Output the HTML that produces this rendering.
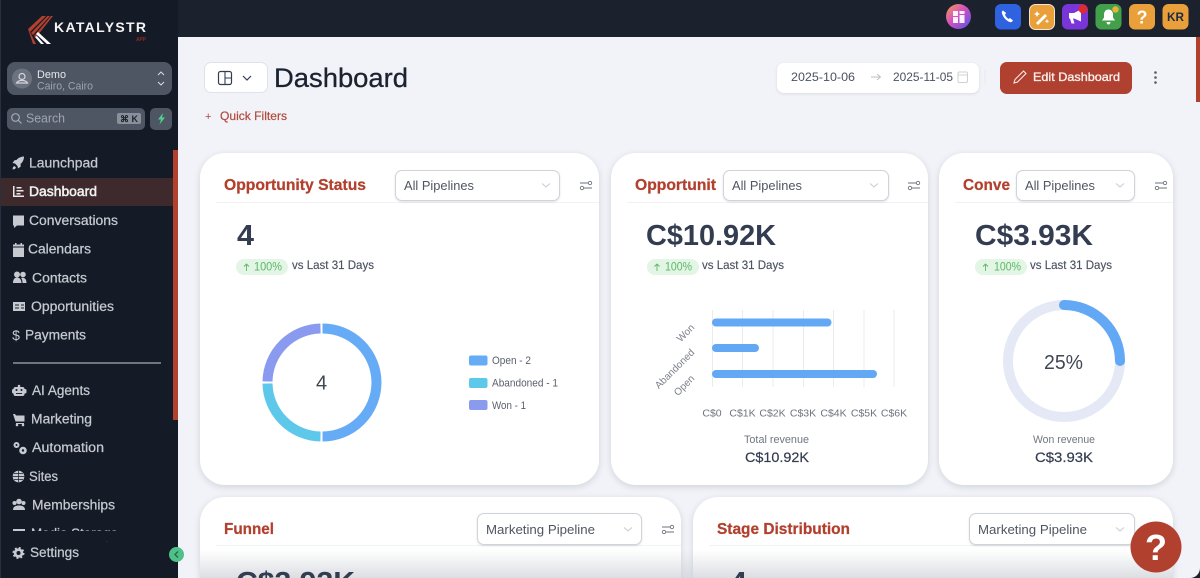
<!DOCTYPE html>
<html lang="en"><head><meta charset="utf-8"><title>Dashboard</title>
<style>
html,body{margin:0;padding:0;width:1200px;height:578px;overflow:hidden;background:#f1f3f8;font-family:"Liberation Sans",sans-serif}
#r{position:absolute;left:0;top:0;width:1200px;height:578px;overflow:hidden}
.b{position:absolute;box-sizing:border-box}
.card{background:#fff;border-radius:25px;box-shadow:0 2px 7px rgba(40,50,70,.16)}
.sel{background:#fff;border:1px solid #cfd3da;border-radius:7px;box-shadow:0 1px 2px rgba(0,0,0,.12)}
svg{position:absolute;left:0;top:0}
text{font-family:"Liberation Sans",sans-serif}
.s{fill:#c6c9d0;stroke:#c6c9d0;stroke-width:.25;font-size:13.5px}
.h{fill:#b2402e;stroke:#b2402e;stroke-width:.25;font-size:15.5px;font-weight:bold}
.o{fill:#505561;font-size:13px}
.n{fill:#333c50;font-weight:bold;font-size:29px}
.v{fill:#4b5160;stroke:#4b5160;stroke-width:.15;font-size:12px}
.g{fill:#5cb868;font-size:12px}
.m{fill:#70757f;font-size:11px}
</style></head><body><div id="r">
<div class="b" style="left:178px;top:0;width:1022px;height:37px;background:#1c212e;box-shadow:0 1px 2px rgba(0,0,0,.15)"></div>
<div class="b" style="left:178px;top:37px;width:1022px;height:541px;background:#f1f3f8"></div>
<div class="b" style="left:0;top:0;width:178px;height:578px;background:#141a26;border-left:1px solid #2a303c"></div>
<div class="b" style="left:1px;top:178px;width:172px;height:28px;background:#3e2a2d"></div>
<div class="b" style="left:173px;top:150px;width:5px;height:270px;background:#b2402e"></div>
<div class="b" style="left:1196px;top:37px;width:4px;height:65px;background:#b2402e"></div>
<div class="b" style="left:7px;top:62px;width:165px;height:33px;background:#4e5664;border-radius:8px"></div>
<div class="b" style="left:7px;top:108px;width:138px;height:22px;background:#4e5664;border-radius:5px"></div>
<div class="b" style="left:117px;top:113px;width:24px;height:11px;background:#8a909b;border-radius:2px"></div>
<div class="b" style="left:150px;top:108px;width:22px;height:22px;background:#4e5664;border-radius:5px"></div>
<div class="b" style="left:13px;top:362px;width:148px;height:1.5px;background:#6f7480"></div>

<div class="b" style="left:204px;top:62px;width:64px;height:31px;background:#fff;border:1px solid #dfe2e8;border-radius:7px"></div>
<div class="b" style="left:777px;top:63px;width:202px;height:30px;background:#fff;border-radius:7px;box-shadow:0 1px 3px rgba(0,0,0,.1)"></div>
<div class="b" style="left:1000px;top:62px;width:132px;height:32px;background:#b04030;border-radius:7px"></div>

<div class="b card" style="left:200px;top:153px;width:399px;height:332px"></div>
<div class="b card" style="left:611px;top:153px;width:317px;height:332px"></div>
<div class="b card" style="left:939px;top:153px;width:234px;height:332px"></div>
<div class="b card" style="left:200px;top:497px;width:481px;height:81px;border-radius:25px 25px 0 0"></div>
<div class="b card" style="left:693px;top:497px;width:480px;height:81px;border-radius:25px 25px 0 0"></div>

<div class="b" style="left:216px;top:202px;width:383px;height:1px;background:#f1f2f5"></div>
<div class="b" style="left:627px;top:202px;width:301px;height:1px;background:#f1f2f5"></div>
<div class="b" style="left:955px;top:202px;width:218px;height:1px;background:#f1f2f5"></div>
<div class="b" style="left:216px;top:545px;width:465px;height:1px;background:#f1f2f5"></div>
<div class="b" style="left:709px;top:545px;width:464px;height:1px;background:#f1f2f5"></div>

<div class="b sel" style="left:395px;top:170px;width:165px;height:31px"></div>
<div class="b sel" style="left:723px;top:170px;width:166px;height:31px"></div>
<div class="b sel" style="left:1016px;top:170px;width:119px;height:31px"></div>
<div class="b sel" style="left:477px;top:513px;width:165px;height:32px"></div>
<div class="b sel" style="left:969px;top:513px;width:166px;height:32px"></div>

<div class="b" style="left:236px;top:259px;width:52px;height:16px;background:#e3f5e4;border-radius:8px"></div>
<div class="b" style="left:647px;top:259px;width:52px;height:16px;background:#e3f5e4;border-radius:8px"></div>
<div class="b" style="left:975px;top:259px;width:52px;height:16px;background:#e3f5e4;border-radius:8px"></div>

<div class="b" style="left:200px;top:550px;width:973px;height:28px;background:linear-gradient(to bottom,rgba(225,228,234,0),rgba(205,208,215,.7))"></div>

<svg width="1200" height="578" viewBox="0 0 1200 578" xmlns="http://www.w3.org/2000/svg">
<defs><clipPath id="frame"><rect x="0" y="0" width="1200" height="578"/></clipPath></defs>
<!-- logo -->
<g fill="#b2402e"><path d="M28 29 42 16h4L30 32z"/><path d="M31 33 47.500 16H50L33 35z"/><path d="M34 36 51 16h2L35.500 38z"/><path d="M28 29l2 3 6 12h-3z"/></g>
<g fill="#fff"><path d="M36 34l2-2 13 12h-4z"/><path d="M35 37l2-1 7 8h-3z"/></g>
<text x="54" y="32" font-size="14" font-weight="bold" fill="#f4f4f4" textLength="92" lengthAdjust="spacing">KATALYSTR</text>
<text x="136" y="41" font-size="5" font-weight="bold" fill="#8e2e22" textLength="10" lengthAdjust="spacingAndGlyphs">APP</text>

<!-- location -->
<circle cx="22" cy="78.500" r="10" fill="#6b7280"/>
<circle cx="22" cy="76.500" r="3" fill="none" stroke="#d5d7dc" stroke-width="1.200"/>
<path d="M16.500 83c1-2 3-2.500 5.500-2.500s4.500.5 5.500 2.500z" fill="none" stroke="#d5d7dc" stroke-width="1.200"/>
<text x="37" y="78" style="font-size:11px;fill:#e7e8eb" textLength="29" lengthAdjust="spacingAndGlyphs">Demo</text>
<text x="37" y="89.500" style="font-size:11px;fill:#9ea3ad" textLength="56" lengthAdjust="spacingAndGlyphs">Cairo, Cairo</text>
<path d="M158 75l3-3 3 3M158 82l3 3 3-3" fill="none" stroke="#d5d7dc" stroke-width="1.100"/>
<!-- search -->
<circle cx="15.500" cy="117.500" r="3.800" fill="none" stroke="#a5a9b2" stroke-width="1.200"/><path d="M18.500 120.500l3 3" stroke="#a5a9b2" stroke-width="1.200"/>
<text x="26" y="122.500" style="font-size:12.500px;fill:#a0a5ae" textLength="39" lengthAdjust="spacingAndGlyphs">Search</text>
<text x="120" y="122" style="font-size:9px;font-weight:bold;fill:#20242c" textLength="18" lengthAdjust="spacingAndGlyphs">⌘ K</text>
<path d="M163 113l-5 6.500h3l-1.500 5 5.500-7h-3z" fill="#4fd08c"/>

<!-- nav icons -->
<g fill="#c6c9d0">
<path d="M16.500 160c2-2.500 5-3.500 7.500-3.500 0 2.500-1 5.500-3.500 7.500l.3 2.500-2.800 2-.5-2.500-2.500-2.500-2.500-.5 2-2.800zM13 167l1.500-1 1.500 1.500-1 1.500-2.500.5z"/>
<path d="M13 186v11h11v-1.500h-9.500V186zM16.500 187h5v1.500h-5zM16.500 190h7v1.500h-7zM16.500 193h4v1.500h-4z" fill="#e9e9ec"/>
<path d="M13 215.500h11v10h-7l-3 2.500v-2.500h-1z"/>
<path d="M13 247.500h11v9.500H13zM13 244.500h11v2H13zM15 243h1.500v2.500H15zM20.500 243H22v2.500h-1.500z"/>
<circle cx="17" cy="274.500" r="3"/><circle cx="23" cy="274.500" r="2.800"/><path d="M13 283c0-4 2-5.500 4-5.500s4.500 1.500 4.500 5.500zM22.500 283c0-2-.5-4-1.500-5 3-1 5.500.5 5.500 5z"/>
<path d="M13 302h12v9H13z"/>
<circle cx="19" cy="386" r="1.300"/><rect x="13.500" y="387" width="11" height="9" rx="2"/><rect x="12" y="389" width="14.500" height="4.500" rx="1.500"/>
<path d="M13 414h2l1 1.500h8.500v6h-9zM16 423h8v1h-8z"/><circle cx="17" cy="425" r="1.300"/><circle cx="23" cy="425" r="1.300"/>
<circle cx="16.500" cy="445" r="3"/><circle cx="23" cy="450.500" r="3.800"/>
<circle cx="18.500" cy="476.500" r="5.800"/>
<circle cx="19" cy="501.500" r="2.800"/><circle cx="14.500" cy="503" r="2"/><circle cx="23.500" cy="503" r="2"/><path d="M13 510c0-3 2-4.500 6-4.500s6 1.500 6 4.500z"/>
<rect x="13" y="529" width="12" height="2"/>
<circle cx="18.500" cy="553" r="4.800"/>
</g>
<circle cx="18.500" cy="553" r="5.200" fill="none" stroke="#c6c9d0" stroke-width="1.600" stroke-dasharray="2 2.100"/>
<path d="M15 305h4M15 308h4M21 305h3M21 308h3" stroke="#141a26" stroke-width="1.100"/>
<path d="M12.700 476.500h11.600M18.500 470.700v11.600M14 473.500h9M14 479.500h9" stroke="#141a26" stroke-width=".7"/>
<circle cx="18.500" cy="553" r="2" fill="#141a26"/>
<circle cx="16.500" cy="445" r="1" fill="#141a26"/><circle cx="23" cy="450.500" r="1.200" fill="#141a26"/>
<circle cx="16.500" cy="390" r="1" fill="#141a26"/><circle cx="21.500" cy="390" r="1" fill="#141a26"/><path d="M16 393.500h6" stroke="#141a26" stroke-width=".9"/>
<text x="16" y="340" style="font-size:14px;fill:#c6c9d0" text-anchor="middle">$</text>

<!-- nav text -->
<text x="29" y="167.500" class="s" textLength="69" lengthAdjust="spacingAndGlyphs">Launchpad</text>
<text x="29" y="196" class="s" style="fill:#f0f0f2;stroke:#f0f0f2;stroke-width:.5" textLength="68" lengthAdjust="spacingAndGlyphs">Dashboard</text>
<text x="29" y="225" class="s" textLength="89" lengthAdjust="spacingAndGlyphs">Conversations</text>
<text x="28" y="253.500" class="s" textLength="63" lengthAdjust="spacingAndGlyphs">Calendars</text>
<text x="32" y="282.500" class="s" textLength="55" lengthAdjust="spacingAndGlyphs">Contacts</text>
<text x="31" y="311" class="s" textLength="83" lengthAdjust="spacingAndGlyphs">Opportunities</text>
<text x="25" y="339.500" class="s" textLength="61" lengthAdjust="spacingAndGlyphs">Payments</text>
<text x="32" y="395" class="s" textLength="58" lengthAdjust="spacingAndGlyphs">AI Agents</text>
<text x="31" y="423.500" class="s" textLength="61" lengthAdjust="spacingAndGlyphs">Marketing</text>
<text x="32" y="452" class="s" textLength="72" lengthAdjust="spacingAndGlyphs">Automation</text>
<text x="29" y="481" class="s" textLength="29" lengthAdjust="spacingAndGlyphs">Sites</text>
<text x="32" y="509.500" class="s" textLength="83" lengthAdjust="spacingAndGlyphs">Memberships</text>
<text x="31" y="538" class="s" textLength="87" lengthAdjust="spacingAndGlyphs">Media Storage</text>
<rect x="1" y="531" width="172" height="10" fill="#141a26"/>
<text x="30" y="557" class="s" textLength="49" lengthAdjust="spacingAndGlyphs">Settings</text>
<circle cx="176.500" cy="554.500" r="7.500" fill="#4fc088"/><path d="M178 551.500l-3 3 3 3" fill="none" stroke="#1e6b4a" stroke-width="1.300"/>

<!-- top bar -->
<defs><linearGradient id="gr" x1="0" y1="0" x2="1" y2="1"><stop offset="0" stop-color="#f0a24a"/><stop offset=".45" stop-color="#d650c0"/><stop offset="1" stop-color="#4f55e6"/></linearGradient></defs>
<circle cx="958.500" cy="16.500" r="12.500" fill="url(#gr)"/>
<path d="M953 11h5v5h-5zM953 17h5v6h-5zM959.500 11h5v3h-5zM959.500 15h5v8h-5z" fill="#fff" opacity=".92"/>
<rect x="995" y="4" width="26" height="25.500" rx="6" fill="#2f62e0"/>
<path d="M1003 10.500c-1 .5-1.500 1.500-1 3 1 3.500 4 7 7.500 8.500 1.500.5 2.500 0 3.500-1.500l-3-2.500-1.500 1c-1.500-1-3-2.500-3.500-4.500l1.200-1.500z" fill="#fff"/>
<rect x="1029.500" y="4.500" width="25" height="25" rx="6" fill="#e9a03a" stroke="#f4e6cf" stroke-width="1"/>
<path d="M1036 23l9-9 2 2-9 9z" fill="#fff"/><path d="M1037 11l1 2 2 1-2 1-1 2-1-2-2-1 2-1zM1047 19l.7 1.500 1.500.7-1.500.7-.7 1.500-.7-1.500-1.500-.7 1.500-.7z" fill="#fff"/>
<rect x="1062" y="4" width="26" height="25.500" rx="6" fill="#7a35d8"/>
<path d="M1069 13h5l7-3.500v12l-7-3h-1l1.500 5h-3l-1.500-5h-1z" fill="#fff"/>
<circle cx="1083" cy="9" r="4.500" fill="#e32a2a"/>
<rect x="1095.500" y="4" width="26" height="25.500" rx="6" fill="#43a04a"/>
<path d="M1108.500 9.500c3 0 4.500 2.500 4.500 5v3l2 3h-13l2-3v-3c0-2.500 1.500-5 4.500-5zM1106.500 22h4c0 1.500-1 2.500-2 2.500s-2-1-2-2.500z" fill="#fff"/>
<circle cx="1115.500" cy="9.500" r="3.200" fill="#e9b23a"/>
<rect x="1129" y="4" width="26" height="25.500" rx="6" fill="#e9a03a"/>
<text x="1142" y="23.500" text-anchor="middle" font-size="18" font-weight="bold" fill="#fff">?</text>
<rect x="1162.500" y="4" width="26" height="25.500" rx="6" fill="#e9a03a"/>
<text x="1167" y="21" font-size="12" font-weight="bold" fill="#1c2a40" textLength="17" lengthAdjust="spacingAndGlyphs">KR</text>

<!-- page head -->
<rect x="218.500" y="71.500" width="13" height="13" rx="2" fill="none" stroke="#333c50" stroke-width="1.200"/>
<path d="M225 71.500v13M225 78h6.500" stroke="#333c50" stroke-width="1.100" fill="none"/>
<path d="M243 76l4 4 4-4" fill="none" stroke="#333c50" stroke-width="1.200"/>
<text x="274" y="87" font-size="27" fill="#1b2230" stroke="#1b2230" stroke-width=".3" textLength="134" lengthAdjust="spacingAndGlyphs">Dashboard</text>
<text x="205" y="120" font-size="11" fill="#b2493b">+</text>
<text x="220" y="120" font-size="12" fill="#b2493b" stroke="#b2493b" stroke-width=".2" textLength="67" lengthAdjust="spacingAndGlyphs">Quick Filters</text>
<text x="791" y="81" font-size="12" fill="#4b5160" textLength="64" lengthAdjust="spacingAndGlyphs">2025-10-06</text>
<path d="M871 77h9M877 74l3.500 3-3.500 3" fill="none" stroke="#b9bdc5" stroke-width=".9"/>
<text x="893" y="81" font-size="12" fill="#4b5160" textLength="60" lengthAdjust="spacingAndGlyphs">2025-11-05</text>
<rect x="958" y="72" width="9.500" height="10.500" rx="1.500" fill="none" stroke="#cdd0d6"/><path d="M958 75h9.500" stroke="#cdd0d6"/>
<path d="M985 70v14" stroke="#e6e8ed"/>
<path d="M1014 83l1-3.500 8.500-8.500 2.500 2.500-8.500 8.500-3.500 1z" fill="none" stroke="#f7e8e4" stroke-width="1.100"/>
<text x="1033" y="81" font-size="12" fill="#f9efec" stroke="#f9efec" stroke-width=".35" textLength="87" lengthAdjust="spacingAndGlyphs">Edit Dashboard</text>
<circle cx="1155.500" cy="72.500" r="1.300" fill="#555b68"/><circle cx="1155.500" cy="77.500" r="1.300" fill="#555b68"/><circle cx="1155.500" cy="82.500" r="1.300" fill="#555b68"/>

<!-- card headers -->
<text x="224" y="190" class="h" textLength="142" lengthAdjust="spacingAndGlyphs">Opportunity Status</text>
<text x="635" y="190" class="h" textLength="81" lengthAdjust="spacingAndGlyphs">Opportunit</text>
<text x="963" y="190" class="h" textLength="47" lengthAdjust="spacingAndGlyphs">Conve</text>
<text x="224" y="534" class="h" textLength="50" lengthAdjust="spacingAndGlyphs">Funnel</text>
<text x="717" y="534" class="h" textLength="133" lengthAdjust="spacingAndGlyphs">Stage Distribution</text>
<text x="404" y="190" class="o" textLength="70" lengthAdjust="spacingAndGlyphs">All Pipelines</text>
<text x="732" y="190" class="o" textLength="70" lengthAdjust="spacingAndGlyphs">All Pipelines</text>
<text x="1025" y="190" class="o" textLength="70" lengthAdjust="spacingAndGlyphs">All Pipelines</text>
<text x="486" y="534" class="o" textLength="109" lengthAdjust="spacingAndGlyphs">Marketing Pipeline</text>
<text x="978" y="534" class="o" textLength="109" lengthAdjust="spacingAndGlyphs">Marketing Pipeline</text>
<g fill="none" stroke="#c7cad0" stroke-width="1">
<path d="M542 183.500l4 3.500 4-3.500M870 183.500l4 3.500 4-3.500M1116 183.500l4 3.500 4-3.500M624 527.500l4 3.500 4-3.500M1116 527.500l4 3.500 4-3.500"/>
</g>
<defs><g id="f" fill="none" stroke="#6d727c" stroke-width=".9"><path d="M0 3h8M4 8h8"/><circle cx="10" cy="3" r="1.700"/><circle cx="2" cy="8" r="1.700"/></g></defs>
<use href="#f" x="580" y="180"/><use href="#f" x="908" y="180"/><use href="#f" x="1155" y="180"/><use href="#f" x="662" y="524"/>

<!-- stats -->
<text x="237" y="245" class="n" textLength="17" lengthAdjust="spacingAndGlyphs">4</text>
<text x="646" y="245" class="n" textLength="130" lengthAdjust="spacingAndGlyphs">C$10.92K</text>
<text x="975" y="245" class="n" textLength="118" lengthAdjust="spacingAndGlyphs">C$3.93K</text>
<g fill="none" stroke="#5cb868" stroke-width=".9"><path d="M246.500 271v-7M244 266.500l2.500-2.500 2.500 2.500M657 271v-7M654.500 266.500l2.500-2.500 2.500 2.500M985.500 271v-7M983 266.500l2.500-2.500 2.500 2.500"/></g>
<text x="254" y="270.500" class="g" textLength="28" lengthAdjust="spacingAndGlyphs">100%</text>
<text x="665" y="270.500" class="g" textLength="27" lengthAdjust="spacingAndGlyphs">100%</text>
<text x="994" y="270.500" class="g" textLength="27" lengthAdjust="spacingAndGlyphs">100%</text>
<text x="292" y="269" class="v" textLength="82" lengthAdjust="spacingAndGlyphs">vs Last 31 Days</text>
<text x="702" y="269" class="v" textLength="82" lengthAdjust="spacingAndGlyphs">vs Last 31 Days</text>
<text x="1030" y="269" class="v" textLength="82" lengthAdjust="spacingAndGlyphs">vs Last 31 Days</text>

<!-- donut -->
<g fill="none" stroke-width="10">
<path d="M322.500 328.500a54 54 0 0 1 0 108" stroke="#65abf5"/>
<path d="M320.500 436.500a54 54 0 0 1-53-53" stroke="#5ec8ea"/>
<path d="M267.500 381.500a54 54 0 0 1 53-53" stroke="#8a9bef"/>
</g>
<text x="321.500" y="389.500" text-anchor="middle" font-size="20" fill="#3f4654">4</text>
<rect x="469" y="355.500" width="18.500" height="10" rx="2" fill="#65abf5"/>
<rect x="469" y="378" width="18.500" height="10" rx="2" fill="#5ec8ea"/>
<rect x="469" y="400" width="18.500" height="10" rx="2" fill="#8a9bef"/>
<text x="492" y="364" font-size="11" fill="#5a5f6a" textLength="39" lengthAdjust="spacingAndGlyphs">Open - 2</text>
<text x="492" y="386.500" font-size="11" fill="#5a5f6a" textLength="66" lengthAdjust="spacingAndGlyphs">Abandoned - 1</text>
<text x="492" y="409" font-size="11" fill="#5a5f6a" textLength="34" lengthAdjust="spacingAndGlyphs">Won - 1</text>

<!-- bar chart -->
<g stroke="#e9ebef" stroke-width="1"><path d="M712.500 310v77M742.500 310v77M773 310v77M803.500 310v77M833.500 310v77M864 310v77M894 310v77"/></g>
<rect x="712" y="318.500" width="119.500" height="8" rx="4" fill="#62a8f5"/>
<rect x="712" y="344" width="47" height="8" rx="4" fill="#62a8f5"/>
<rect x="712" y="370" width="165" height="8" rx="4" fill="#62a8f5"/>
<g font-size="10" fill="#7b808a">
<text transform="translate(693 326) rotate(-45)" text-anchor="end" x="0" y="3">Won</text>
<text transform="translate(693 351) rotate(-45)" text-anchor="end" x="0" y="3">Abandoned</text>
<text transform="translate(693 377) rotate(-45)" text-anchor="end" x="0" y="3">Open</text>
</g>
<g font-size="10.500" fill="#6f747e" text-anchor="middle">
<text x="712" y="416.500">C$0</text><text x="742.500" y="416.500">C$1K</text><text x="772.500" y="416.500">C$2K</text><text x="803" y="416.500">C$3K</text><text x="833.500" y="416.500">C$4K</text><text x="864" y="416.500">C$5K</text><text x="894" y="416.500">C$6K</text>
</g>
<text x="744" y="443" class="m" textLength="65" lengthAdjust="spacingAndGlyphs">Total revenue</text>
<text x="745" y="462" font-size="14" fill="#333c50" stroke="#333c50" stroke-width=".2" textLength="64" lengthAdjust="spacingAndGlyphs">C$10.92K</text>

<!-- gauge -->
<circle cx="1064" cy="361" r="56" fill="none" stroke="#e4e9f5" stroke-width="10"/>
<path d="M1064 305a56 56 0 0 1 56 56" fill="none" stroke="#62a8f5" stroke-width="10" stroke-linecap="round"/>
<text x="1044" y="369" font-size="20" fill="#3f4654" textLength="39" lengthAdjust="spacingAndGlyphs">25%</text>
<text x="1033" y="443" class="m" textLength="62" lengthAdjust="spacingAndGlyphs">Won revenue</text>
<text x="1035" y="462" font-size="14" fill="#333c50" stroke="#333c50" stroke-width=".2" textLength="58" lengthAdjust="spacingAndGlyphs">C$3.93K</text>

<!-- row 2 clipped content -->
<g clip-path="url(#frame)">
<text x="236" y="592" class="n" textLength="119" lengthAdjust="spacingAndGlyphs">C$3.93K</text>
<text x="730" y="592" class="n" textLength="17" lengthAdjust="spacingAndGlyphs">4</text>
</g>

<!-- help -->
<circle cx="1156" cy="547" r="25.500" fill="#b2402e"/>
<text x="1156" y="560" text-anchor="middle" font-size="36" font-weight="bold" fill="#fff">?</text>
<path d="M1200 568a10 10 0 0 1-10 10h10z" fill="#1c212e"/>
</svg>
</div></body></html>
